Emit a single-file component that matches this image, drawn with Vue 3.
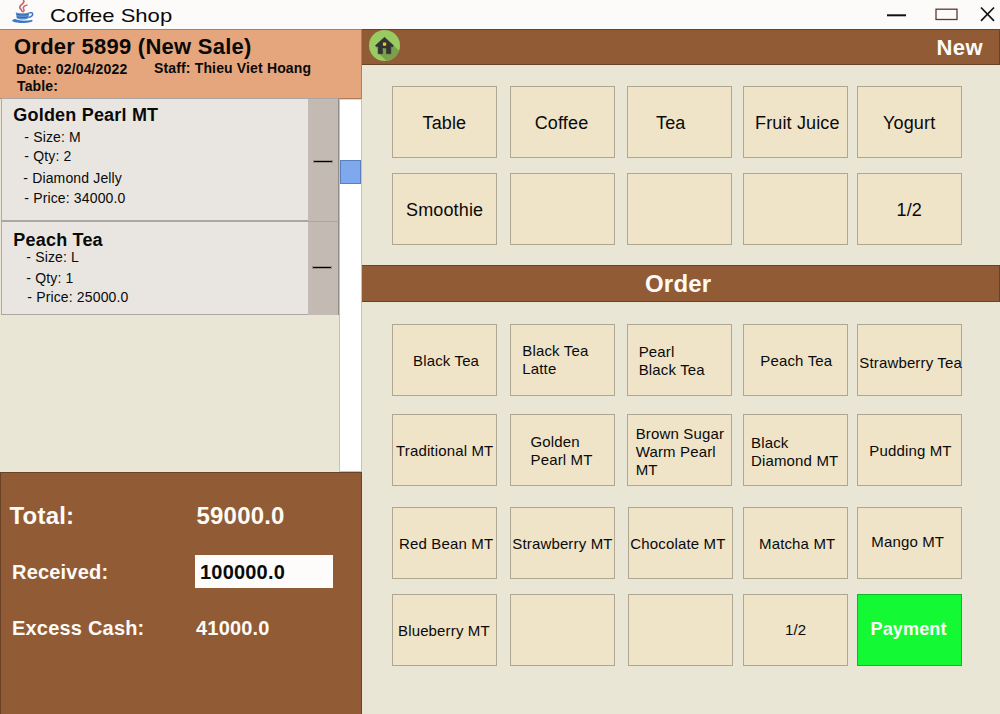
<script setup>
import { ref } from 'vue'

const received = ref('100000.0')

// pad: [left, top] inset of the label inside its tile
const categories = [
  { label: 'Table', pad: [29.5, 25] },
  { label: 'Coffee', pad: [23.7, 25] },
  { label: 'Tea', pad: [28, 25] },
  { label: 'Fruit Juice', pad: [11, 25] },
  { label: 'Yogurt', pad: [25, 25] },
  { label: 'Smoothie', pad: [13, 25] },
  { label: '', pad: [0, 0] },
  { label: '', pad: [0, 0] },
  { label: '', pad: [0, 0] },
  { label: '1/2', pad: [38.5, 25] },
]

const productsTop = [
  { label: 'Black Tea', pad: [20, 27] },
  { label: 'Black Tea\nLatte', pad: [11.3, 17] },
  { label: 'Pearl\nBlack Tea', pad: [10.7, 18] },
  { label: 'Peach Tea', pad: [16.3, 27] },
  { label: 'Strawberry Tea', pad: [1.3, 29] },
  { label: 'Traditional MT', pad: [3, 27] },
  { label: 'Golden\nPearl MT', pad: [19.5, 18] },
  { label: 'Brown Sugar\nWarm Pearl\nMT', pad: [7.7, 10] },
  { label: 'Black\nDiamond MT', pad: [7, 19] },
  { label: 'Pudding MT', pad: [11.3, 27] },
]

const productsBottom = [
  { label: 'Red Bean MT', pad: [6, 27] },
  { label: 'Strawberry MT', pad: [1.3, 27] },
  { label: 'Chocolate MT', pad: [1.3, 27] },
  { label: 'Matcha MT', pad: [15, 27] },
  { label: 'Mango MT', pad: [13.3, 25] },
  { label: 'Blueberry MT', pad: [5, 27] },
  { label: '', pad: [0, 0] },
  { label: '', pad: [0, 0] },
  { label: '1/2', pad: [41, 26] },
  { label: 'Payment', pad: [12.5, 23], pay: true },
]

const inset = (t) => ({ paddingLeft: t.pad[0] + 'px', paddingTop: t.pad[1] + 'px' })
</script>

<template>
  <div class="window">
    <header class="titlebar">
      <svg class="java" viewBox="1 0.5 22 22" width="24" height="24">
        <g fill="none" stroke="#c9686a" stroke-linecap="round">
          <path d="M12.600 1.200c1.600 2.600-4.400 3.700-3.500 6.300.4 1.300 1.900 2 2.100 3.500" stroke-width="1.600" />
          <path d="M15.600 5.200c-2.600.8-4.200 2-2.900 3.700.6.9.5 1.500-.3 2.300" stroke-width="1.400" />
        </g>
        <path d="M5.300 11.700c3 1.300 9.700 1.200 12.400 0l-.8 5.500c-2 1.500-8.600 1.500-10.600 0z" fill="#5d8fce" />
        <path d="M6 13.600c3 .9 8.500.8 11.300 0M6.300 16c3 .9 8 .8 10.600 0" stroke="#2f66ad" stroke-width=".9" fill="none" />
        <path d="M17.600 12.400c4-1.600 5 2.700-.6 4.200" stroke="#3f75bb" stroke-width="1.300" fill="none" />
        <path d="M5 18c-7 1.500 0 3.600 6.500 3.500 7.500 0 11-1.600 8.500-2.900-3 1.100-11.500 1.300-15-.6z" fill="#3e78be" />
      </svg>
      <h1 class="app-name">Coffee Shop</h1>
      <svg class="controls" viewBox="0 0 120 29" width="120" height="29" fill="none">
        <path d="M7 15.300h19" stroke="#111" stroke-width="2" />
        <rect x="56" y="9.200" width="21" height="10.300" stroke="#5a3a34" stroke-width="1.300" />
        <path d="M101 7.500l13 13.300M114 7.500l-13 13.300" stroke="#151515" stroke-width="1.700" />
      </svg>
    </header>

    <div class="body">
      <aside class="side">
        <section class="order-head">
          <h2>Order 5899 (New Sale)</h2>
          <div class="meta"><span class="date">Date: 02/04/2022</span><span class="staff">Staff: Thieu Viet Hoang</span></div>
          <div class="table-no">Table:</div>
        </section>

        <section class="cart">
          <div class="items">
            <article class="item first">
              <div class="info">
                <h3>Golden Pearl MT</h3>
                <p class="size">- Size: M</p>
                <p class="qty">- Qty: 2</p>
                <p class="extra">- Diamond Jelly</p>
                <p class="price">- Price: 34000.0</p>
              </div>
              <button class="remove" aria-label="Remove"><i></i></button>
            </article>
            <article class="item second">
              <div class="info">
                <h3>Peach Tea</h3>
                <p class="size">- Size: L</p>
                <p class="qty">- Qty: 1</p>
                <p class="price">- Price: 25000.0</p>
              </div>
              <button class="remove" aria-label="Remove"><i></i></button>
            </article>
          </div>
          <div class="scroll"><div class="thumb"></div></div>
        </section>

        <section class="totals">
          <div class="row total"><span>Total:</span><b>59000.0</b></div>
          <div class="row received"><span>Received:</span><input v-model="received" /></div>
          <div class="row excess"><span>Excess Cash:</span><b>41000.0</b></div>
        </section>
      </aside>

      <main class="menu">
        <div class="bar top">
          <svg class="home" viewBox="0 0 32 32" width="32" height="32">
            <circle cx="16.500" cy="15.500" r="15.500" fill="#99cb62" />
            <path d="M25 15l6.200 5.800c-2 5.200-6.700 9.300-12.400 10.100L10.500 23.500l4-2 4-8z" fill="#7aa04b" />
            <path d="M16.500 7.300l9 8.300-1.300 1.500-1.400-1.200v7.800h-4.300V18h-3.900v5.700h-4.500v-7.800l-1.400 1.200-1.300-1.500z" fill="#333" stroke="#333" stroke-width=".6" stroke-linejoin="round" />
            <rect x="14.900" y="12.400" width="3.300" height="3.300" rx=".6" fill="#f6c317" />
          </svg>
          <span class="new">New</span>
        </div>
        <div class="grid categories">
          <button v-for="(t, i) in categories" :key="i" class="tile" :style="inset(t)">{{ t.label }}</button>
        </div>
        <div class="bar order">Order</div>
        <div class="grid upper">
          <button v-for="(t, i) in productsTop" :key="i" class="tile" :style="inset(t)">{{ t.label }}</button>
        </div>
        <div class="grid lower">
          <button v-for="(t, i) in productsBottom" :key="i" class="tile" :class="{ pay: t.pay }" :style="inset(t)">{{ t.label }}</button>
        </div>
      </main>
    </div>
  </div>
</template>

<style>
body { margin: 0; overflow: hidden; }
</style>

<style scoped>
* { box-sizing: border-box; }
h1, h2, h3, p { margin: 0; }
button { margin: 0; font: inherit; color: inherit; letter-spacing: inherit; }
.window {
  width: 1000px; height: 714px; overflow: hidden;
  display: flex; flex-direction: column;
  background: #e9e6d6; color: #0a0a0a;
  font-family: "Liberation Sans", Arial, sans-serif;
  letter-spacing: 0.15px; white-space: nowrap;
}
.titlebar { height: 29px; flex: none; display: flex; background: #fcfbf9; }
.java { margin-left: 11px; }
.app-name {
  width: 120px; margin: 4.5px 0 0 15px;
  font-size: 19px; line-height: 22px; font-weight: 400; letter-spacing: 0;
  transform: scaleX(1.16); transform-origin: 0 0;
}
.controls { margin-left: auto; }
.body { flex: 1; display: flex; min-height: 0; }

.side { width: 362px; flex: none; display: flex; flex-direction: column; }
.order-head {
  height: 70px; padding: 5px 0 0 14px; flex: none;
  background: #e6a67d; border: 1px solid #ad7d5e; border-left: 0;
  font-size: 14px; line-height: 16px; font-weight: 700;
}
.order-head h2 { font-size: 22px; line-height: 24px; letter-spacing: 0.25px; }
.meta { display: flex; margin-top: 1px; padding-left: 2px; }
.date { width: 138px; padding-top: 1px; letter-spacing: 0.15px; }
.staff { letter-spacing: 0.15px; }
.table-no { padding-left: 3px; margin-top: 1px; }
.cart { height: 373px; flex: none; display: flex; }
.items { width: 339px; padding-left: 1px; margin-top: -1px; }
.item { display: flex; background: #e9e6e1; }
.first { height: 123px; }
.second { height: 94px; }
.info { width: 307px; border-left: 1px solid #adaaa7; border-top: 1px solid #a9a6a4; border-bottom: 1px solid #a9a6a4; padding-left: 11.3px; font-size: 14px; line-height: 16px; }
.info h3 { font-size: 18px; line-height: 20px; margin-top: 6px; letter-spacing: 0.2px; }
.first p { padding-left: 11px; }
.first .size { margin-top: 4px; }
.first .qty { margin-top: 3px; }
.first .extra { margin-top: 6px; padding-left: 10px; }
.first .price { margin-top: 4px; }
.second h3 { margin-top: 8px; }
.second p { padding-left: 13px; }
.second .size { margin-top: -1px; }
.second .qty { margin-top: 5px; }
.second .price { margin-top: 3px; padding-left: 14px; }
.remove { width: 31px; padding: 0; border: 0; border-right: 1px solid #918c88; border-top: 1px solid #a9a6a4; background: #c3bab4; display: block; }
.remove i { display: block; width: 18px; height: 1px; margin: 3px 0 0 6px; background: #000; box-shadow: 0 0 0 1px #9a938c; }
.second .remove i { margin-left: 5px; margin-top: -2px; }
.scroll { width: 23px; background: #fff; border: 1px solid #c3c2bf; border-top-color: #d8d7d5; padding-top: 60px; }
.thumb { height: 24px; background: #7fa9ee; border: 1px solid #5b7fba; }

.totals { flex: 1; background: #915b35; border: 1px solid #6a4227; border-bottom: 0; color: #fdfbf8; font-size: 20px; font-weight: 700; padding-top: 26px; letter-spacing: 0.2px; }
.row { display: flex; align-items: center; height: 33px; padding-left: 11px; }
.row span { width: 184px; }
.received span, .excess span, .excess b { padding-top: 2px; }
.row input {
  width: 138px; height: 33px; margin-left: -1px; padding: 1px 0 0 5px; border: 0; border-radius: 0;
  background: #fdfcfa; color: #0a0a0a; font: inherit; letter-spacing: inherit; outline: 0;
}
.total { font-size: 24px; padding-left: 8.5px; }
.total span { width: 187px; }
.received { margin-top: 23px; }
.excess { margin-top: 23px; }

.menu { width: 638px; }
.bar { background: #915b35; border: 1px solid #6a4227; border-left: 0; color: #fdfbf8; font-weight: 700; display: flex; }
.top { height: 36px; font-size: 22px; line-height: 35px; justify-content: space-between; padding: 0 16px 0 6px; }
.new { letter-spacing: 0.4px; }
.order { height: 37px; margin-top: 20px; font-size: 24px; line-height: 36px; padding-left: 283px; letter-spacing: 0.2px; }
.grid { display: grid; grid-template-columns: 118px 117px 116px 114px 105px; margin-left: 30px; }
.categories { margin-top: 21px; row-gap: 15px; font-size: 18px; line-height: 22px; letter-spacing: 0.15px; }
.upper { margin-top: 22px; row-gap: 18px; font-size: 15px; line-height: 18px; }
.lower { margin-top: 21px; row-gap: 15px; font-size: 15px; line-height: 18px; grid-template-columns: 118px 118px 115px 114px 105px; }
.tile {
  width: 105px; height: 72px; padding: 0; display: flex; align-items: flex-start;
  border: 1px solid #afa792; background: #efe4c8; text-align: left; white-space: pre;
}
.pay { background: #13fa35; border-color: #10b529; color: #fdfdf8; font-size: 18px; line-height: 22px; font-weight: 700; }
</style>
